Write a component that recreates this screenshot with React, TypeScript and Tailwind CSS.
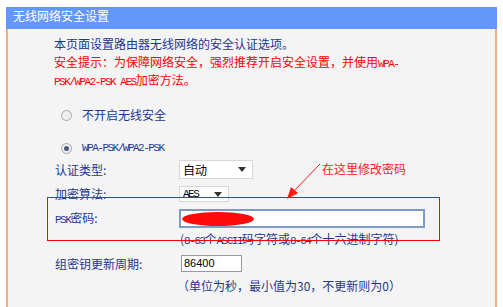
const cjk = "font-['Noto_Sans_CJK_SC','Noto_Sans',sans-serif]";
const mono = "font-['Liberation_Mono','DejaVu_Sans_Mono',monospace] text-[11px] tracking-[-1.5px] leading-none";

function Radio({ checked }: { checked?: boolean }) {
  return (
    <span className="w-[11px] h-[11px] rounded-full border border-[#a9a9a9] bg-[#eeeeee] flex items-center justify-center">
      {checked && <span className="w-[5px] h-[5px] rounded-full bg-[#4a5a80]" />}
    </span>
  );
}

function Select({ value, width, ascii }: { value: string; width: string; ascii?: boolean }) {
  return (
    <div className={`${width} h-full bg-white border border-[#d8d8d8] flex items-center justify-between pl-[3px] pr-[6px]`}>
      <span className={ascii ? `${mono} text-black` : "text-[12px] leading-none text-black"}>{value}</span>
      <svg width="8" height="5" viewBox="0 0 8 5">
        <path d="M0 0 L8 0 L4 5 Z" fill="#333" />
      </svg>
    </div>
  );
}

export default function App() {
  return (
    <div className={`w-[503px] h-[307px] bg-white pt-[7px] overflow-hidden relative ${cjk}`}>
      <div className="ml-[6px] w-[491px] h-full flex flex-col">
        {/* 标题栏 */}
        <div className="h-[22px] bg-[#6497fb] text-white text-[12px] leading-[18px] pl-[7px]">
          无线网络安全设置
        </div>

        {/* 内容 */}
        <div className="flex-1 bg-[#f4f4f4] border-l-2 border-r-2 border-[#f2b07a] text-[#26368f] text-[12px]">
          <div className="pl-[46px] pt-[6px]">
            <p className="h-[18px] leading-[18px]">本页面设置路由器无线网络的安全认证选项。</p>
            <p className="h-[18px] leading-[18px] text-[#ff0000]">
              安全提示：为保障网络安全，强烈推荐开启安全设置，并使用<span className={mono}>WPA-</span>
            </p>
            <p className="h-[18px] leading-[18px] text-[#ff0000]">
              <span className={mono}>PSK/WPA2-PSK AES</span>加密方法。
            </p>
          </div>

          <div className="mt-[17px] h-[18px] pl-[53px] flex items-center gap-[10px]">
            <Radio />
            <span className="leading-none">不开启无线安全</span>
          </div>

          <div className="mt-[15px] h-[18px] pl-[53px] flex items-center gap-[10px]">
            <Radio checked />
            <span className={mono}>WPA-PSK/WPA2-PSK</span>
          </div>

          <div className="mt-[3px] h-[19px] pl-[47px] flex items-center">
            <span className="w-[124px] leading-none">认证类型:</span>
            <Select value="自动" width="w-[74px]" />
          </div>

          <div className="mt-[7px] h-[16px] pl-[47px] flex items-center">
            <span className="w-[124px] leading-none">加密算法:</span>
            <Select value="AES" width="w-[50px]" ascii />
          </div>

          <div className="mt-[7px] h-[19px] pl-[47px] flex items-center">
            <span className="w-[124px] leading-none">
              <span className={mono}>PSK</span>密码:
            </span>
            <div className="w-[246px] h-full bg-white border-2 border-[#7e9ac8] flex items-center pl-[1px]">
              <span className="w-[72px] h-[14px] rounded-[50%] bg-[#ff0a0a]" />
            </div>
          </div>

          <div className="mt-[3px] h-[18px] pl-[172px] flex items-center">
            <span className="leading-none">
              (<span className={mono}>8-63</span>个<span className={mono}>ASCII</span>码字符或<span className={mono}>8-64</span>个十六进制字符)
            </span>
          </div>

          <div className="mt-[6px] h-[17px] pl-[47px] flex items-center">
            <span className="w-[126px] leading-none">组密钥更新周期:</span>
            <div className="w-[61px] h-full bg-white border border-[#9a9a9a] flex items-center pl-[2px]">
              <span className="text-[11px] leading-none text-black font-['Liberation_Sans',sans-serif]">86400</span>
            </div>
          </div>

          <div className="mt-[5px] h-[18px] pl-[169px] flex items-center">
            <span className="leading-none">（单位为秒，最小值为30，不更新则为0）</span>
          </div>
        </div>
      </div>

      {/* 标注 */}
      <div className="absolute left-[47px] top-[197px] w-[393px] h-[44px] border border-[#ff0000]" />
      <svg className="absolute left-[284px] top-[162px]" width="40" height="40" viewBox="0 0 40 40">
        <line x1="36" y1="2" x2="9" y2="30" stroke="#ff1a1a" strokeWidth="1" />
        <path d="M3 37 L7 25 L14 31 Z" fill="#ff1a1a" />
      </svg>
      <div className="absolute left-[322px] top-[160px] text-[12px] leading-[18px] text-[#ff2020]">
        在这里修改密码
      </div>
    </div>
  );
}
